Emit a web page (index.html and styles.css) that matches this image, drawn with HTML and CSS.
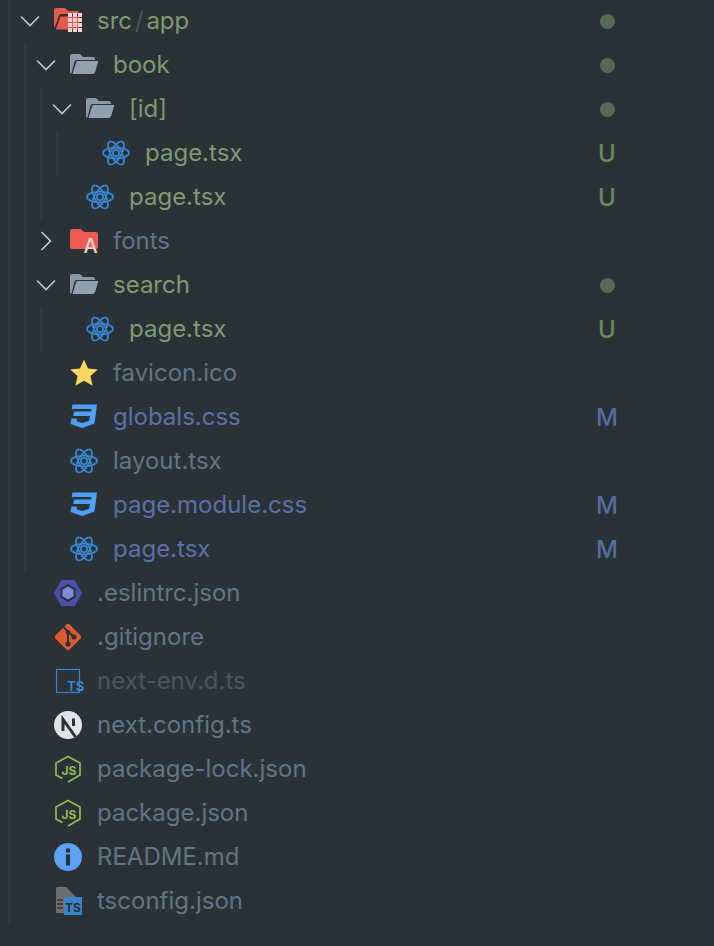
FILE: index.html
```html
<!DOCTYPE html>
<html lang="en">
<head>
<meta charset="utf-8">
<title>Explorer</title>
<link rel="stylesheet" href="styles.css">
</head>
<body>
<svg class="defs" width="0" height="0" aria-hidden="true">
  <defs>
    <symbol id="chev-down" viewBox="0 0 20 20"><path d="M1 5.5 10 14.5 19 5.5" fill="none" stroke="#c4cac9" stroke-width="1.6"/></symbol>
    <symbol id="chev-right" viewBox="0 0 20 20"><path d="M5.5 1 14.5 10 5.5 19" fill="none" stroke="#c4cac9" stroke-width="1.6"/></symbol>
    <symbol id="folder-open" viewBox="0 0 28 28">
      <path fill="#8b99a6" d="M0 5a2 2 0 0 1 2-2h8l3 3h10a2 2 0 0 1 2 2v1H7c-1.300 0-2.200.6-2.600 2L2 20.500 1 23a1.500 1.500 0 0 1-1-1.500z"/>
      <path fill="#93a1ae" d="M6.500 10H28.500l-3.500 11.300A2.500 2.500 0 0 1 22.600 23H2.500z"/>
    </symbol>
    <symbol id="react" viewBox="0 0 28 28">
      <g fill="none" stroke="#3a84cf" stroke-width="1.800">
        <ellipse cx="14" cy="14" rx="13" ry="5.400"/>
        <ellipse cx="14" cy="14" rx="13" ry="5.400" transform="rotate(60 14 14)"/>
        <ellipse cx="14" cy="14" rx="13" ry="5.400" transform="rotate(120 14 14)"/>
        <circle cx="14" cy="14" r="3.200"/>
      </g>
    </symbol>
    <symbol id="css" viewBox="0 0 28 28">
      <path fill="#4f9ff5" d="M2.500 1.500H27L24.500 20.500 12 25 .5 21 1.500 15.500H7L6.500 18 12 20 19 18 20 13H3.200L4.200 8.500H21L21.500 6H1.600z"/>
    </symbol>
    <symbol id="js" viewBox="0 0 28 28">
      <path fill="none" stroke="#8fbb50" stroke-width="1.700" d="M8.500 23.500 2 20V8L14 1.500 26 8V20L14 27"/>
      <text x="7.500" y="19.500" class="js-letters">JS</text>
    </symbol>
  </defs>
</svg>

<main class="tree guide">
  <div class="row">
    <svg class="chev"><use href="#chev-down"/></svg>
    <svg class="icon" viewBox="0 0 28 28">
      <path fill="#e6594f" d="M0 3a2 2 0 0 1 2-2h9l3 3h9a2 2 0 0 1 2 2v1H7.500c-1.400 0-2.400.8-2.800 2L3 14.500.7 20.500A2 2 0 0 1 0 19z"/>
      <path fill="#e6594f" d="M6.500 9.500H25v13H1.800z"/>
      <g fill="#f9d3d3">
        <rect x="14" y="6" width="4" height="4"/><rect x="19" y="6" width="4" height="4"/><rect x="24" y="6" width="4" height="4"/>
        <rect x="14" y="11" width="4" height="4"/><rect x="19" y="11" width="4" height="4"/><rect x="24" y="11" width="4" height="4"/>
        <rect x="14" y="16" width="4" height="4"/><rect x="19" y="16" width="4" height="4"/><rect x="24" y="16" width="4" height="4"/>
        <rect x="14" y="21" width="4" height="4"/><rect x="19" y="21" width="4" height="4"/><rect x="24" y="21" width="4" height="4"/>
      </g>
    </svg>
    <span class="label added">src<span class="sep">/</span>app</span>
    <span class="status dot"></span>
  </div>
  <div class="group guide">
    <div class="row">
      <svg class="chev"><use href="#chev-down"/></svg>
      <svg class="icon"><use href="#folder-open"/></svg>
      <span class="label added">book</span>
      <span class="status dot"></span>
    </div>
    <div class="group guide">
      <div class="row">
        <svg class="chev"><use href="#chev-down"/></svg>
        <svg class="icon"><use href="#folder-open"/></svg>
        <span class="label added">[id]</span>
        <span class="status dot"></span>
      </div>
      <div class="group guide">
        <div class="row">
          <span class="chev"></span>
          <svg class="icon"><use href="#react"/></svg>
          <span class="label added">page.tsx</span>
          <span class="status letter-u">U</span>
        </div>
      </div>
      <div class="row">
        <span class="chev"></span>
        <svg class="icon"><use href="#react"/></svg>
        <span class="label added">page.tsx</span>
        <span class="status letter-u">U</span>
      </div>
    </div>
    <div class="row">
      <svg class="chev"><use href="#chev-right"/></svg>
      <svg class="icon" viewBox="0 0 28 28">
        <path fill="#ef5b55" d="M0 4a2 2 0 0 1 2-2h8.500l3.500 3h12a2 2 0 0 1 2 2v13a2 2 0 0 1-2 2H2a2 2 0 0 1-2-2z"/>
        <text x="13.500" y="26" class="font-letter">A</text>
      </svg>
      <span class="label">fonts</span>
    </div>
    <div class="row">
      <svg class="chev"><use href="#chev-down"/></svg>
      <svg class="icon"><use href="#folder-open"/></svg>
      <span class="label added">search</span>
      <span class="status dot"></span>
    </div>
    <div class="group guide">
      <div class="row">
        <span class="chev"></span>
        <svg class="icon"><use href="#react"/></svg>
        <span class="label added">page.tsx</span>
        <span class="status letter-u">U</span>
      </div>
    </div>
    <div class="row">
      <span class="chev"></span>
      <svg class="icon" viewBox="0 0 28 28"><path fill="#fcd462" d="M14 .5 18 9.500 27.800 10.500 20.500 17 22.600 26.700 14 21.700 5.400 26.700 7.500 17 .2 10.500 10 9.500z"/></svg>
      <span class="label">favicon.ico</span>
    </div>
    <div class="row">
      <span class="chev"></span>
      <svg class="icon"><use href="#css"/></svg>
      <span class="label modified">globals.css</span>
      <span class="status letter-m">M</span>
    </div>
    <div class="row">
      <span class="chev"></span>
      <svg class="icon"><use href="#react"/></svg>
      <span class="label">layout.tsx</span>
    </div>
    <div class="row">
      <span class="chev"></span>
      <svg class="icon"><use href="#css"/></svg>
      <span class="label modified">page.module.css</span>
      <span class="status letter-m">M</span>
    </div>
    <div class="row">
      <span class="chev"></span>
      <svg class="icon"><use href="#react"/></svg>
      <span class="label modified">page.tsx</span>
      <span class="status letter-m">M</span>
    </div>
  </div>
  <div class="row">
    <span class="chev"></span>
    <svg class="icon" viewBox="0 0 28 28">
      <path fill="#4b4fb0" d="M7.500 1H20.500L28 14 20.500 27H7.500L0 14z"/>
      <path fill="#2a3238" d="M14 5 21.800 9.500V18.500L14 23 6.200 18.500V9.500z"/>
      <path fill="#8089d8" d="M14 7.500 19.600 10.700V17.300L14 20.500 8.400 17.300V10.700z"/>
    </svg>
    <span class="label">.eslintrc.json</span>
  </div>
  <div class="row">
    <span class="chev"></span>
    <svg class="icon" viewBox="0 0 28 28">
      <rect x="4" y="4" width="20" height="20" rx="2.500" transform="rotate(45 14 14)" fill="#dc5a2d"/>
      <path fill="none" stroke="#2a3238" stroke-width="2" d="M8.500 3 14 8.500V21M14 8.500 20 14"/>
      <circle cx="14" cy="21" r="2.600" fill="#2a3238"/><circle cx="14" cy="9" r="2.200" fill="#2a3238"/><circle cx="20" cy="14" r="2.500" fill="#2a3238"/>
    </svg>
    <span class="label">.gitignore</span>
  </div>
  <div class="row">
    <span class="chev"></span>
    <svg class="icon" viewBox="0 0 28 28">
      <rect x="2.500" y="2.500" width="23" height="23" fill="none" stroke="#3a84cf" stroke-width="1.200"/>
      <text x="13" y="23.500" class="ts-outline">TS</text>
    </svg>
    <span class="label ignored">next-env.d.ts</span>
  </div>
  <div class="row">
    <span class="chev"></span>
    <svg class="icon" viewBox="0 0 28 28">
      <circle cx="14" cy="14" r="14" fill="#dfe3e3"/>
      <path fill="none" stroke="#2a3238" stroke-width="3" d="M9 20V8.500L21.500 26"/>
      <path fill="none" stroke="#2a3238" stroke-width="3" d="M19.500 7.500V15"/>
    </svg>
    <span class="label">next.config.ts</span>
  </div>
  <div class="row">
    <span class="chev"></span>
    <svg class="icon"><use href="#js"/></svg>
    <span class="label">package-lock.json</span>
  </div>
  <div class="row">
    <span class="chev"></span>
    <svg class="icon"><use href="#js"/></svg>
    <span class="label">package.json</span>
  </div>
  <div class="row">
    <span class="chev"></span>
    <svg class="icon" viewBox="0 0 28 28">
      <circle cx="14" cy="14" r="14" fill="#5ba0f2"/>
      <rect x="12" y="5.500" width="4" height="4" fill="#2a3238"/>
      <rect x="12" y="11.500" width="4" height="11" fill="#2a3238"/>
    </svg>
    <span class="label">README.md</span>
  </div>
  <div class="row">
    <span class="chev"></span>
    <svg class="icon" viewBox="0 0 28 28">
      <path fill="#6e6e70" d="M2 1.500A1.500 1.500 0 0 1 3.500 0H12L22 10V26H3.500A1.500 1.500 0 0 1 2 24.500z"/>
      <path fill="none" stroke="#2a3238" stroke-width="1.300" d="M3 13H9M3 17H9M3 21H9"/>
      <rect x="10" y="10" width="18" height="18" fill="#3b84cb"/>
      <text x="19" y="24.500" class="ts-solid">TS</text>
    </svg>
    <span class="label">tsconfig.json</span>
  </div>
</main>
</body>
</html>
```

FILE: styles.css
```css
* {
  box-sizing: border-box;
}

html,
body {
  margin: 0;
  height: 100%;
}

body {
  background: #2a3238;
  font-family: Inter, "Liberation Sans", sans-serif;
  font-size: 24px;
  overflow: hidden;
  color: #607685;
}

.defs {
  position: absolute;
}

.tree {
  margin: -1px 0 0 8px;
}

.guide {
  border-left: 2px solid #2f3b40;
}

.group {
  margin-left: 14px;
}

.row {
  display: flex;
  align-items: center;
  height: 44px;
  padding-right: 95px;
}

.chev {
  flex: none;
  width: 20px;
  height: 20px;
  margin-left: 10px;
}

.icon {
  flex: none;
  width: 28px;
  height: 28px;
  margin-left: 14px;
  overflow: visible;
}

.label {
  margin-left: 15px;
  white-space: nowrap;
  line-height: 44px;
}

.added {
  color: #7f9a6f;
}

.modified {
  color: #5a70a6;
}

.ignored {
  color: #46565f;
}

.sep {
  margin: 0 3px;
  color: #4f6152;
  font-weight: 300;
}

.status {
  margin-left: auto;
  width: 24px;
  text-align: center;
  font-weight: 500;
}

.dot {
  height: 15px;
  width: 15px;
  margin-right: 4px;
  border-radius: 50%;
  background: #546a56;
}

.letter-u {
  color: #6b8a60;
}

.letter-m {
  color: #566c9c;
}

.js-letters {
  font-size: 12px;
  font-weight: 700;
  fill: #8fbb50;
  letter-spacing: 0;
}

.font-letter {
  font-size: 20px;
  font-weight: 500;
  fill: #f9d3d3;
}

.ts-outline {
  font-size: 13px;
  font-weight: 700;
  fill: #3a84cf;
}

.ts-solid {
  font-size: 12px;
  font-weight: 700;
  fill: #22303c;
  text-anchor: middle;
}
```
